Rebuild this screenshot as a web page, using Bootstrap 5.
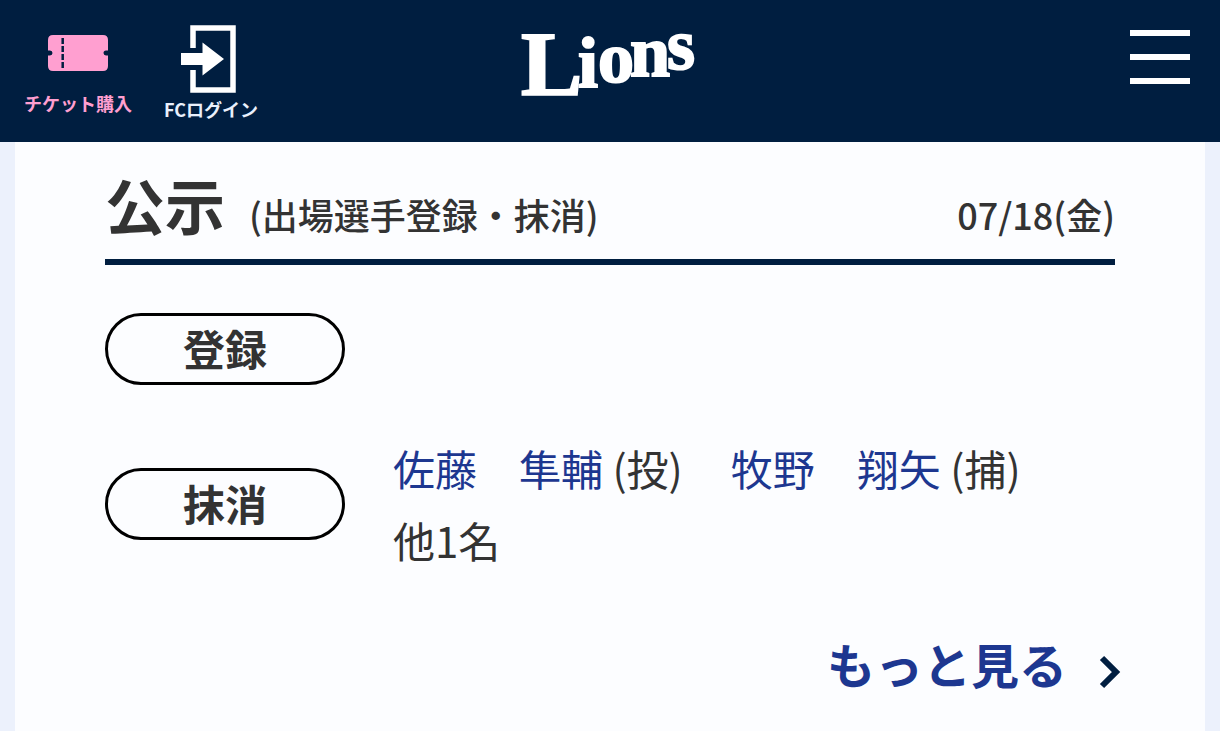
<!DOCTYPE html>
<html lang="ja">
<head>
<meta charset="utf-8">
<meta name="viewport" content="width=device-width, initial-scale=1">
<title>Lions 公示</title>
<link href="https://cdn.jsdelivr.net/npm/bootstrap@5.3.0/dist/css/bootstrap.min.css" rel="stylesheet">
<style>
  :root { --navy: #001e40; --royal: #1d3790; --ink: #333; --pink: #ff9fd0; }
  body { font-family: "Noto Sans CJK JP", sans-serif; color: var(--ink); background: #ecf1fc; }
  a { text-decoration: none; color: var(--royal); }
  .site-bar { background: var(--navy); height: 142px; }
  .bar-side { flex: 1 1 0; }
  .bar-item { font-size: 18px; line-height: 24px; font-weight: 700; padding-left: 24px; }
  .bar-item svg { display: block; }
  .bar-ticket { color: var(--pink); padding-top: 35px; }
  .bar-ticket svg { margin-bottom: 20px; }
  .bar-login { color: #e9f0fc; padding-top: 25px; padding-left: 32px; }
  .bar-login svg { margin-bottom: 4px; }
  .team-logo svg { display: block; }
  .team-logo text { font-family: "Liberation Serif", serif; font-weight: 700; fill: #fff; stroke: #fff; stroke-width: 2; }
  .menu-btn { padding: 30px 30px 0; border: 0; background: none; }
  .menu-btn span { display: block; width: 60px; height: 6px; background: #fff; margin-bottom: 18px; }
  .sheet { background: #fcfdff; margin: 0 15px; padding: 18px 90px; }
  .sheet-head { border-bottom: 6px solid var(--navy); padding-bottom: 12px; margin-bottom: 48px; gap: 24px; }
  .sheet-head h1 { font-size: 60px; line-height: 87px; font-weight: 700; }
  .sub { font-size: 36px; font-weight: 500; }
  .notice { gap: 48px; }
  .notice + .notice { margin: 47px 0 48px; }
  .pill { width: 240px; height: 72px; border: 3px solid #000; font-size: 42px; font-weight: 700; line-height: 64px; }
  .players { font-size: 42px; line-height: 72px; column-gap: 48px; }
  .more { font-size: 48px; line-height: 78px; font-weight: 700; gap: 32px; margin-right: -6px; }
  .more svg { margin-top: 18px; }
</style>
</head>
<body class="d-flex flex-column min-vh-100">
<header class="site-bar d-flex align-items-start">
  <nav class="bar-side d-flex">
    <a href="#" class="bar-item bar-ticket d-flex flex-column align-items-center">
      <svg width="60" height="36" viewBox="0 0 60 36" aria-hidden="true">
        <path fill="currentColor" d="M5 0H55Q60 0 60 5V15.500H58A2.500 2.500 0 0 0 58 20.500H60V31Q60 36 55 36H5Q0 36 0 31V20.500H2A2.500 2.500 0 0 0 2 15.500H0V5Q0 0 5 0Z"/>
        <path stroke="#001e40" stroke-width="2.500" stroke-dasharray="6 2" d="M14.700 3V33"/>
      </svg>
      <span>チケット購入</span>
    </a>
    <a href="#" class="bar-item bar-login d-flex flex-column align-items-center">
      <svg width="60" height="68" viewBox="0 0 60 68" aria-hidden="true">
        <path fill="none" stroke="#fff" stroke-width="5.500" d="M12 23V3H52V65H12V45"/>
        <path fill="#fff" d="M-1 28H21.500V17.500L43 34L21.500 50.500V40H-1Z"/>
      </svg>
      <span>FCログイン</span>
    </a>
  </nav>
  <a href="#" class="team-logo" aria-label="Lions">
    <svg width="212" height="124" viewBox="0 0 212 124">
      <text x="17 74 94 126 163" y="95 87 82 76 69" font-size="72"><tspan font-size="92">L</tspan>ions</text>
    </svg>
  </a>
  <div class="bar-side d-flex justify-content-end">
    <button type="button" class="menu-btn" aria-label="メニュー"><span></span><span></span><span></span></button>
  </div>
</header>
<main class="sheet flex-fill">
  <div class="sheet-head d-flex align-items-baseline">
    <h1 class="m-0">公示</h1>
    <span class="sub">(出場選手登録・抹消)</span>
    <time class="sub ms-auto" datetime="07-18">07/18(金)</time>
  </div>
  <section class="notice d-flex align-items-center">
    <h2 class="pill rounded-pill text-center flex-shrink-0 m-0">登録</h2>
  </section>
  <section class="notice d-flex align-items-center">
    <h2 class="pill rounded-pill text-center flex-shrink-0 m-0">抹消</h2>
    <div class="players d-flex flex-wrap">
      <span><a href="#">佐藤　隼輔</a> (投)</span>
      <span><a href="#">牧野　翔矢</a> (捕)</span>
      <span>他1名</span>
    </div>
  </section>
  <div class="d-flex justify-content-end">
    <a href="#" class="more d-flex align-items-center">もっと見る
      <svg width="22" height="34" viewBox="0 0 22 34" aria-hidden="true"><path fill="none" stroke="#001e40" stroke-width="6" d="M3 3L17 17L3 31"/></svg>
    </a>
  </div>
</main>
<script src="https://cdn.jsdelivr.net/npm/bootstrap@5.3.0/dist/js/bootstrap.bundle.min.js"></script>
</body>
</html>
